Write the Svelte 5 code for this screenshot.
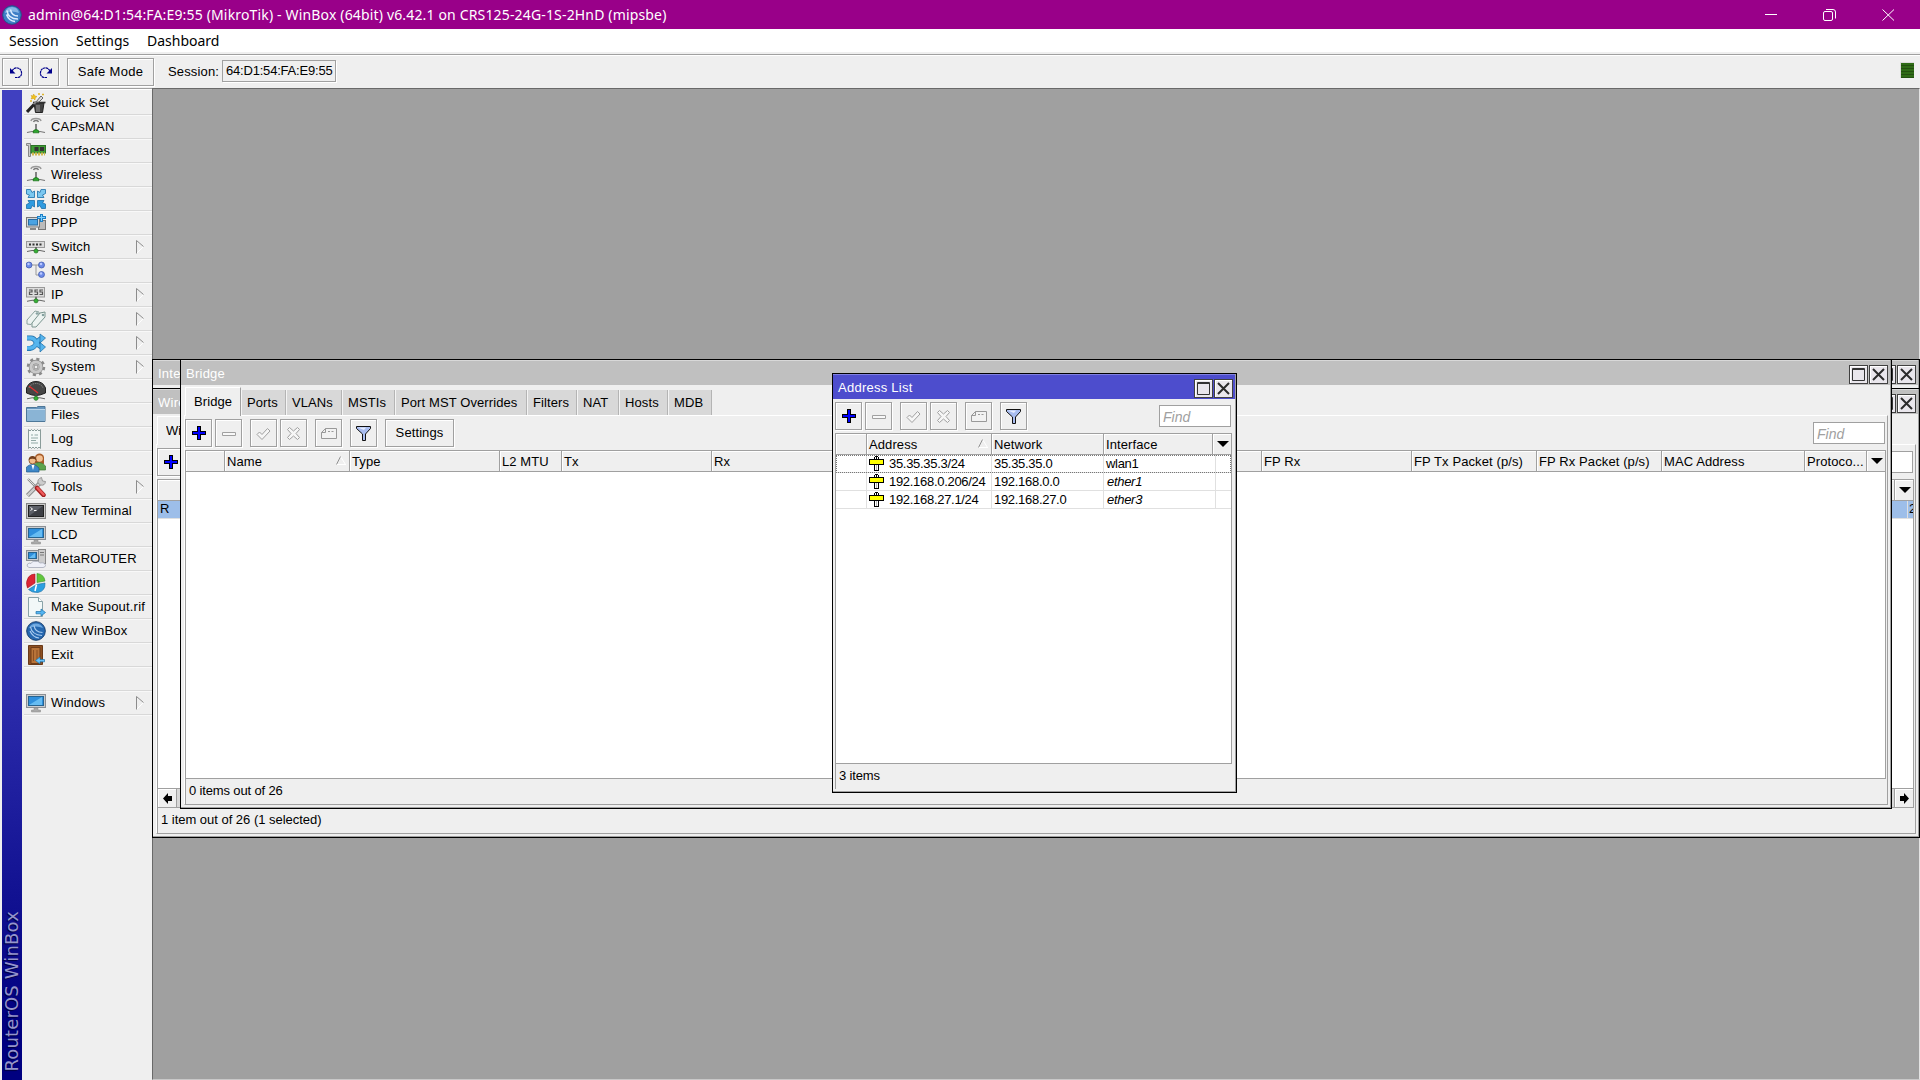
<script>
  const items = [
    ['Quick Set', 'wand'], ['CAPsMAN', 'antenna'], ['Interfaces', 'card'], ['Wireless', 'antenna'],
    ['Bridge', 'bridge'], ['PPP', 'ppp'], ['Switch', 'switch', 1], ['Mesh', 'mesh'], ['IP', 'ip', 1],
    ['MPLS', 'mpls', 1], ['Routing', 'routing', 1], ['System', 'gear', 1], ['Queues', 'gauge'],
    ['Files', 'folder'], ['Log', 'log'], ['Radius', 'users'], ['Tools', 'tools', 1],
    ['New Terminal', 'terminal'], ['LCD', 'monitor'], ['MetaROUTER', 'meta'], ['Partition', 'pie'],
    ['Make Supout.rif', 'supout'], ['New WinBox', 'winbox'], ['Exit', 'exit'], ['', ''],
    ['Windows', 'monitor', 1]
  ];
  const tabs = [
    ['Ports', 45], ['VLANs', 56], ['MSTIs', 53], ['Port MST Overrides', 132],
    ['Filters', 50], ['NAT', 42], ['Hosts', 49], ['MDB', 44]
  ];
  const bridgeCols = [
    ['', 38], ['Name', 125], ['Type', 150], ['L2 MTU', 62], ['Tx', 150], ['Rx', 150],
    ['', 125], ['', 125], ['', 150], ['FP Rx', 150],
    ['FP Tx Packet (p/s)', 125], ['FP Rx Packet (p/s)', 125], ['MAC Address', 143], ['Protoco...', 62]
  ];
  const addrCols = [['', 30], ['Address', 125], ['Network', 112], ['Interface', 109]];
  const rows = [
    ['35.35.35.3/24', '35.35.35.0', 'wlan1'],
    ['192.168.0.206/24', '192.168.0.0', 'ether1'],
    ['192.168.27.1/24', '192.168.27.0', 'ether3']
  ];
</script>

{#snippet net(y)}
  <path d="M1 {y + .5}L6 {y - .5}H14L19 {y + .5}" stroke="#666" /><path d="M10 {y - 4}V{y}" stroke="#555" stroke-width="1.4" />
  <circle cx="10" cy={y} r="2.1" fill="#35b035" stroke="#176617" stroke-width=".6" />
{/snippet}

{#snippet screen(w, h)}
  <rect x=".5" y="1.5" width={w} height={h} fill="#c9ccd0" stroke="#8b8f94" />
  <rect x="2.5" y="3.5" width={w - 4} height={h - 4} fill="#2f8fdc" stroke="#27648f" />
  <path d="M3 {h - 1}L{w - 3} 4V{h - 1}Z" fill="#66bcf2" />
{/snippet}

{#snippet icon(n)}
  <svg class="ico" width="20" height="20" viewBox="0 0 20 20" fill="none">
    {#if n === 'wand'}
      <path d="M8 10H18L16.500 19.500H9.500Z" fill="#444" stroke="#222" />
      <path d="M11 12V19M13 12V19" stroke="#999" /><path d="M7 9.500H19.500" stroke="#333" stroke-width="1.600" />
      <path d="M10 9L15 3L17 5L13 9Z" fill="#ddd" stroke="#666" />
      <path d="M1 19L8 11.500" stroke="#222" stroke-width="3" /><path d="M8 11L10 8.500" stroke="#888" stroke-width="2" />
      <path d="M7.500 1L9 3L11 3.500L9.200 5L9 7L7.500 5.500L5 6L6 4L5 2.500L7 3Z" fill="#f2c21a" stroke="#c99a13" stroke-width=".5" />
      <path d="M12 1H14M16 1.500H18M4 8H6" stroke="#e0b52a" stroke-width="1.500" />
    {:else if n === 'antenna'}
      <path d="M5 4Q5.500 1.500 10 1.500T15 4" stroke="#999" stroke-width="1.500" /><path d="M7.500 5Q8 3.500 10 3.500T12.500 5" stroke="#777" stroke-width="1.400" />
      <path d="M10 7V13" stroke="#777" stroke-width="1.800" /><path d="M1 15.500L6 14.500H14L19 15.500" stroke="#777" stroke-width="1.200" />
      <path d="M7 15.800Q7 12.500 10 12.500T13 15.800Z" fill="#2fa82f" stroke="#166b16" stroke-width=".7" />
    {:else if n === 'card'}
      <path d="M.5 2.500H4.500V15.500H2.500V4.500H.5Z" fill="#ccc" stroke="#888" />
      <rect x="5" y="4.500" width="14.500" height="7.500" fill="#3f9d35" stroke="#2b7225" />
      <path d="M6 13H19" stroke="#d3b94e" stroke-width="3" stroke-dasharray="2 1" />
      <rect x="8.500" y="6" width="4" height="4" fill="#333" /><rect x="14" y="6" width="4" height="4" fill="#333" />
    {:else if n === 'bridge'}
      {#each [0, 90, 180, 270] as a}
        <path transform="rotate({a} 10 10)" d="M.5 .5H4.500L6 3.500L8.500 2V8.500H2L3.500 6L.5 5Z" fill={a > 90 ? '#2f9be0' : '#7cc8f0'} stroke="#1a6fa8" stroke-width=".8" />
      {/each}
    {:else if n === 'ppp'}
      <rect x="12.500" y="7.500" width="7" height="9" fill="#bbb" stroke="#777" /><rect x=".5" y="4.500" width="13" height="9.500" fill="#d5d8db" stroke="#777" />
      <rect x="2.500" y="6.500" width="9" height="5.500" fill="#4aa3e3" stroke="#2a6ca0" /><path d="M4 16H10" stroke="#888" stroke-width="2" />
      <path d="M11 4.500H20M15.500 1V9" stroke="#1b7fc6" stroke-width="3" /><path d="M12 4.500H19M15.500 2V8" stroke="#7ed0ff" />
    {:else if n === 'switch'}
      <rect x=".5" y="4.500" width="18" height="6" fill="#ddd" stroke="#999" />
      <path d="M3 7.500H17" stroke="#333" stroke-width="2" stroke-dasharray="2 1.500" />
      {@render net(14)}
    {:else if n === 'ip'}
      <rect x=".5" y="2.500" width="18" height="9.500" fill="#ddd" stroke="#999" />
      <path d="M3 5H6V7H3.500V9.500H6.500M12 5H9V7H11.500V9.500H8.500M17 5H14V7H16.500V9.500H13.500" stroke="#555" stroke-width="1.200" />
      {@render net(15.800)}
    {:else if n === 'mesh'}
      <path d="M3 4H17M10 4V14H16" stroke="#999" />
      {#each [[3, 4], [15.500, 4], [15.500, 13.500]] as [x, y]}
        <circle cx={x} cy={y} r="3" fill="#6d8be8" stroke="#3a52a8" stroke-width=".7" /><circle cx={x - .5} cy={y - 1} r="1.200" fill="#bccaff" />
      {/each}
    {:else if n === 'mpls'}
      <path d="M1 11L9 2L13 3V7L5 15.500L1 15Z" fill="#edf3f1" stroke="#8ba39e" /><path d="M6 14L14 4L19 3V8L10 18L6 18Z" fill="#edf3f1" stroke="#7a958f" />
      <circle cx="11" cy="4.500" r=".8" stroke="#688" /><circle cx="17" cy="6" r=".8" stroke="#688" />
    {:else if n === 'routing'}
      <path d="M1 5H5Q8 5 10 9T16 14" stroke="#1d6ca5" stroke-width="5" /><path d="M1 15.500H4Q8 15 10 11T15 5.500" stroke="#2277b5" stroke-width="5" />
      <path d="M1 15H4Q8 15 10 11T15 5.500M1 5H5Q8 5 10 9T16 14" stroke="#56b5ee" stroke-width="3.600" />
      <path d="M14 1L19.500 5L14 10ZM14 9.500L19.500 14L14 19Z" fill="#56b5ee" stroke="#1d6ca5" stroke-width=".7" />
    {:else if n === 'gear'}
      <circle cx="10" cy="10" r="7.500" stroke="#8a8a8a" stroke-width="3.500" stroke-dasharray="2.900 3" />
      <circle cx="10" cy="10" r="5" stroke="#888" stroke-width="4.500" /><circle cx="10" cy="10" r="5" stroke="#c9c9c9" stroke-width="3.200" />
      <circle cx="10" cy="10" r="2" fill="#eee" stroke="#888" />
    {:else if n === 'gauge'}
      <path d="M.5 12V7Q3 .500 10 .500T19.500 7V12Q14 14.500 10 14.500T.5 12Z" fill="#454545" stroke="#222" />
      <path d="M3 7Q5 2.500 10 2.500T17 7" stroke="#999" stroke-dasharray="1 1" /><path d="M3 5L12 12" stroke="#e03030" stroke-width="1.300" />
      {@render net(17.300)}
    {:else if n === 'folder'}
      <path d="M.5 2.500H10.500L12 1.500H19V16.500H.5Z" fill="#6796be" stroke="#4d7798" /><path d="M1 5H19V16H1Z" fill="#8ab4d5" />
      <path d="M1 4.500H19" stroke="#b9d6eb" />
    {:else if n === 'log'}
      <path d="M2.500 .5L4 2L5.500 .5L7 2L8.500 .5L10 2L11.500 .5L13 2L14.500 .5V19.500L13 18L11.500 19.500L10 18L8.500 19.500L7 18L5.500 19.500L4 18L2.500 19.500Z" fill="#f3f8f7" stroke="#8a9c9a" />
      <path d="M5 6H7M8.500 6H12M5 9H12M5 11.500H10M5 14H12" stroke="#91a9a6" />
    {:else if n === 'users'}
      <path d="M9 10V4Q10 .500 13.500 .500T18 4V11Z" fill="#a85b27" /><circle cx="13.500" cy="5.500" r="3.300" fill="#f3c092" />
      <path d="M8 17V12Q10 9 13.500 9.500T19.500 13V17Z" fill="#5aa34c" stroke="#3b7733" stroke-width=".7" />
      <circle cx="6.500" cy="7.500" r="3.500" fill="#f2bd8b" stroke="#7b4318" stroke-width=".8" /><path d="M2.500 7Q3 3 6.500 3T10.500 7Q6 4.500 2.500 7Z" fill="#75401d" />
      <path d="M.5 19V14Q3 11.500 6.500 11.500T13 15V19Z" fill="#3e87c8" stroke="#23598d" stroke-width=".7" /><path d="M5.500 12L7 17L8.500 12Z" fill="#fff" />
    {:else if n === 'tools'}
      <path d="M2 2L12 12" stroke="#888" stroke-width="2.200" /><path d="M2 2L11 11" stroke="#ddd" />
      <path d="M1.500 18.500L15 5" stroke="#777" stroke-width="4" /><path d="M1.500 18.500L15 5" stroke="#ccc" stroke-width="2.500" />
      <path d="M12 6Q11 2 15.500 .5L16.500 4L19.500 4.500Q19 9 14.500 8Z" fill="#ccc" stroke="#888" stroke-width=".8" />
      <path d="M11 11L17.500 18" stroke="#a31f1f" stroke-width="4.500" stroke-linecap="round" /><path d="M11.500 11L17.500 17.500" stroke="#ef5b5b" stroke-width="2.500" stroke-linecap="round" />
    {:else if n === 'terminal'}
      <rect x=".5" y="2.500" width="19" height="15" fill="#c9c9c9" stroke="#858585" /><rect x="2.500" y="4.500" width="15" height="11" fill="#3d3f45" stroke="#222" />
      <path d="M3 15V5H17Z" fill="#5d6068" /><path d="M4.500 6.500L6.500 8L4.500 9.500M8 9.500H10.500" stroke="#fff" />
    {:else if n === 'monitor'}
      {@render screen(19, 13)}
      <path d="M8 15H12V17H14.500V19H5.500V17H8Z" fill="#aaa" stroke="#888" stroke-width=".5" />
    {:else if n === 'meta'}
      <rect x="12.500" y=".5" width="7" height="14" fill="#ccc" stroke="#888" /><path d="M14 3.500H18M14 6H18" stroke="#777" />
      {@render screen(12, 10)}
      <path d="M3 18.500Q0 17.500 1.500 15Q3 13.500 5 14.500Q6.500 11 10 12.500Q12 11.500 14 14Q19 13 19.500 16.500Q19 18.500 17 18.500Z" fill="#eef0f8" stroke="#a5a9b8" stroke-width=".8" />
    {:else if n === 'pie'}
      <path d="M9 1V10L1.500 15Q-1 9 2.500 4Q5 1 9 1Z" fill="#dc2434" stroke="#a3121f" stroke-width=".6" />
      <path d="M11 .5Q18 1 19 8L11 9.500Z" fill="#62c63c" stroke="#37912a" stroke-width=".6" />
      <path d="M10.500 11.500L19 10Q19.500 18 12 19.500Q6 20 2.500 16.500Z" fill="#2b9fe0" stroke="#166aa3" stroke-width=".6" /><path d="M10.500 11.500L9 18" stroke="#fff" stroke-width="1.500" />
    {:else if n === 'supout'}
      <path d="M2.500 .5H12.500L16.500 4.500V19.500H2.500Z" fill="#f2f8f8" stroke="#8aa3a8" /><path d="M12.500 .5V4.500H16.500" fill="#fff" stroke="#8aa3a8" />
      <path d="M10 14.500H15V12L19.500 15.500L15 19V16.800H10Z" fill="#55b5f2" stroke="#1b71ab" stroke-width=".7" />
    {:else if n === 'winbox'}
      <circle cx="10" cy="10" r="9.300" fill="#2668b0" stroke="#173f70" /><path d="M3 7Q5 2.500 10 2.500T17 7Q10 4 3 7Z" fill="#6ea8e0" />
      <path d="M4.500 6Q6 14 16 14.500M8 4.500Q9 11.500 16.500 11.500M4 10Q7 16.500 13 17" stroke="#a9cbef" stroke-width="1.200" />
    {:else if n === 'exit'}
      <path d="M2.500 .5H16.500V19.500H2.500Z" fill="#8d4f22" stroke="#6a3a19" /><path d="M5 2.500H14V18.500H5Z" fill="#b87339" stroke="#6f3d18" /><path d="M7.500 5V16M11 5V16" stroke="#8d4f22" />
      <path d="M18.500 14.500H14V12L9.500 15.500L14 19V16.800H18.500Z" fill="#6bc1f7" stroke="#1b71ab" stroke-width=".7" />
    {/if}
  </svg>
{/snippet}

{#snippet plus()}
  <button class="btn sq"><svg width="14" height="14" viewBox="0 0 14 14" shape-rendering="crispEdges"><path d="M5 0H9V5H14V9H9V14H5V9H0V5H5Z" fill="#000" /><path d="M6 1H8V6H13V8H8V13H6V8H1V6H6Z" fill="#00f" /></svg></button>
{/snippet}

{#snippet tools()}
  {@render plus()}
  <button class="btn sq"><svg width="15" height="15" viewBox="0 0 15 15"><path d="M1.500 6.500H14.500V9.500H1.500Z" fill="#f8f8f8" stroke="#a0a0a0" /></svg></button>
  <button class="btn sq gap"><svg width="15" height="15" viewBox="0 0 15 15"><path d="M1 8.500L3.500 6L6 8.500L11.500 2.500L14 5L6 13.500Z" fill="#f6f6f6" stroke="#a0a0a0" /></svg></button>
  <button class="btn sq"><svg width="15" height="15" viewBox="0 0 15 15"><path d="M3.500 1.500L7.500 5L11.500 1.500L13.500 3.500L10 7.500L13.500 11.500L11.500 13.500L7.500 10L3.500 13.500L1.500 11.500L5 7.500L1.500 3.500Z" fill="#f6f6f6" stroke="#a0a0a0" /></svg></button>
  <button class="btn sq gap"><svg width="16" height="15" viewBox="0 0 16 15"><path d="M4.500 2.500H15.500V12.500H.5V6.500ZM.5 6.500H4.500V2.500" fill="#f2f2f2" stroke="#999" /><path d="M7 5.500H9M10.500 5.500H12.500" stroke="#999" /></svg></button>
  <button class="btn sq gap"><svg width="15" height="15" viewBox="0 0 15 15"><path d="M.5 .5H14.500V2.500L9.500 8V14.500H6.500V8L.5 2.500Z" fill="#a9bdf0" stroke="#111" /><path d="M2 1.500H10L8 4Z" fill="#e6edff" /></svg></button>
{/snippet}

{#snippet winButtons()}
  <span class="winbtns">
    <button class="wb"><svg width="13" height="13" viewBox="0 0 13 13"><path d="M.5 .5H12.500V12.500H.5ZM0 1.500H13" fill="none" stroke="#333" /></svg></button>
    <button class="wb"><svg width="13" height="13" viewBox="0 0 13 13"><path d="M1 1L12 12M12 1L1 12" stroke="#2b2b2b" stroke-width="2" /></svg></button>
  </span>
{/snippet}

{#snippet header(cols)}
  <div class="thead">
    {#each cols as [label, w], i}
      <div class="th" style:width="{w}px">
        {label}
        {#if i === 1}<svg class="sort" width="10" height="9" viewBox="0 0 10 9"><path d="M9.500 8.500L4.500 .5" stroke="#fff" /><path d="M0 8.500H10" stroke="#fff" /><path d="M.5 8.500L4.500 .5" stroke="#909090" /></svg>{/if}
      </div>
    {/each}
    <div class="th drop"><svg width="12" height="6" viewBox="0 0 12 6"><path d="M0 0H12L6 6Z" /></svg></div>
  </div>
{/snippet}

<div class="app">
  <header class="titlebar">
    <svg class="logo" width="20" height="20" viewBox="0 0 20 20" fill="none"><circle cx="10" cy="10" r="9.300" fill="#3e7fc6" stroke="#234f86" /><path d="M3 8Q4 2 10 2T17 8Q10 5 3 8Z" fill="#86b5e4" /><path d="M5 5.500Q6 14 16 14M8.500 4.500Q9.500 11 16 11M4.500 9.500Q7 16 13 16.500" stroke="#dcecff" stroke-width="1.600" /></svg>
    <span class="caption">admin@64:D1:54:FA:E9:55 (MikroTik) - WinBox (64bit) v6.42.1 on CRS125-24G-1S-2HnD (mipsbe)</span>
    <svg class="sys" width="130" height="12" viewBox="0 0 130 12" fill="none" stroke="#fff"><path d="M0 5.500H12" /><rect x="58.500" y="2.500" width="9" height="9" rx="1.500" /><path d="M61 .5H68Q70.500 .5 70.500 3V9.500" /><path d="M117.500 .5L129 11.500M129 .5L117.500 11.500" /></svg>
  </header>
  <nav class="menubar"><span class="m1">Session</span><span class="m2">Settings</span><span>Dashboard</span></nav>
  <div class="toolbar">
    <button class="btn sq"><svg width="14" height="13" viewBox="0 0 14 13" fill="none"><path d="M3 5Q5 1.500 8.500 2T12.500 6.500T9 11.500H6" stroke="#00008b" stroke-width="1.200" stroke-dasharray="2.500 .4" /><path d="M1 2V7.500H6.500Z" fill="#00008b" /></svg></button>
    <button class="btn sq"><svg width="14" height="13" viewBox="0 0 14 13" fill="none"><path d="M11 5Q9 1.500 5.500 2T1.500 6.500T5 11.500H8" stroke="#00008b" stroke-width="1.200" stroke-dasharray="2.500 .4" /><path d="M13 2V7.500H7.500Z" fill="#00008b" /></svg></button>
    <button class="btn safe">Safe Mode</button>
    <span class="slabel">Session:</span><span class="sfield">64:D1:54:FA:E9:55</span>
    <span class="led"></span>
  </div>

  <div class="main">
    <aside>
      <div class="brand"><span>RouterOS WinBox</span></div>
      <div class="menu">
        {#each items as [label, ic, sub]}
          <div class="item">
            {@render icon(ic)}<span>{label}</span>
            {#if sub}<svg class="arrow" width="8" height="14" viewBox="0 0 8 14" fill="none"><path d="M.5 13.500L7.500 6.500" stroke="#fff" /><path d="M7.500 6.500L.5 .5V13.500" stroke="#8c8c8c" /></svg>{/if}
          </div>
        {/each}
      </div>
    </aside>

    <section class="desk">
      <div class="win w-int">
        <div class="cap"><span class="peek">Interface List</span>{@render winButtons()}</div>
      </div>

      <div class="win w-wifi">
        <div class="cap"><span class="peek">Wireless Tables</span>{@render winButtons()}</div>
        <div class="tabs"><span class="tab on"><span class="peek short">WiFi Interfaces</span></span></div>
        <div class="panel">
          <div class="tools">{@render plus()}<span class="find"></span></div>
          <div class="table">
            {@render header([['', 1736]])}
            <div class="selrow"><span>R</span><span class="last">2</span></div>
            <div class="fill"></div>
            <div class="hscroll">
              <button class="sb"><svg width="9" height="11" viewBox="0 0 9 11"><path d="M0 5.500L5 0V3H9V8H5V11Z" /></svg></button>
              <button class="sb"><svg width="9" height="11" viewBox="0 0 9 11"><path d="M9 5.500L4 0V3H0V8H4V11Z" /></svg></button>
            </div>
          </div>
          <div class="status loose">1 item out of 26 (1 selected)</div>
        </div>
      </div>

      <div class="win w-bridge">
        <div class="cap">Bridge{@render winButtons()}</div>
        <div class="tabs">
          <span class="tab on">Bridge</span>
          {#each tabs as [label, w]}<span class="tab" style:width="{w}px">{label}</span>{/each}
        </div>
        <div class="panel">
          <div class="tools">{@render tools()}<button class="btn gap settings">Settings</button><span class="find">Find</span></div>
          <div class="table">
            {@render header(bridgeCols)}
            <div class="fill"></div>
          </div>
          <div class="status">0 items out of 26</div>
        </div>
      </div>

      <div class="win w-addr">
        <div class="cap active">Address List{@render winButtons()}</div>
        <div class="panel flat">
          <div class="tools">{@render tools()}<span class="find">Find</span></div>
          <div class="table">
            {@render header(addrCols)}
            {#each rows as [a, n, f], i}
              <div class="row" class:focus={i === 0}>
                <span class="c0"></span>
                <span class="c1"><svg width="15" height="15" viewBox="0 0 15 15" shape-rendering="crispEdges"><path d="M6 0H9V1H10V3H15V9H10V15H5V9H0V3H5V1H6Z" /><path d="M6 9H9V14H6ZM6 1H7V3H6ZM8 1H9V3H8Z" fill="#fff" /><path d="M7 9H8V14H7Z" fill="#bbb" /><path d="M1 4H14V8H1Z" fill="#ff0" /></svg>{a}</span>
                <span class="c2">{n}</span>
                <span class="c2" class:dyn={i > 0}>{f}</span>
              </div>
            {/each}
            <div class="fill"></div>
          </div>
          <div class="status">3 items</div>
        </div>
      </div>
    </section>
  </div>
</div>

<style>
  :global(body) { margin: 0; overflow: hidden; }
  .app { width: 1920px; height: 1080px; display: flex; flex-direction: column; background: #efefef; font: 13px/16px "Liberation Sans", Arial, sans-serif; color: #000; overflow: hidden; }
  .app * { box-sizing: border-box; }
  button { font: inherit; color: inherit; padding: 0; margin: 0; }
  svg { display: block; flex: none; }

  .titlebar { height: 29px; background: #990089; color: #fff; display: flex; align-items: center; padding: 0 25px 0 2px; font: 14px/18px "Noto Sans", "Open Sans", sans-serif; }
  .caption { margin-left: 6px; white-space: nowrap; letter-spacing: 0.16px; }
  .sys { margin-left: auto; }
  .menubar { height: 26px; padding: 0 9px 1px; background: #fff; border-bottom: 1px solid #a0a0a0; box-shadow: inset 0 -2px #efefef; display: flex; align-items: center; font: 14px/18px "Noto Sans", "Open Sans", sans-serif; letter-spacing: 0; }
  .m1 { width: 67px; }
  .m2 { width: 71px; }
  .toolbar { height: 33px; flex: none; padding: 2px 6px 0 2px; display: flex; align-items: flex-start; gap: 3px; border-top: 1px solid #fff; }
  .btn { height: 28px; border: 1px solid #a0a0a0; background: #efefef; box-shadow: inset 1px 1px #fff, 1px 1px #fff; display: flex; align-items: center; justify-content: center; flex: none; }
  .sq { width: 27px; }
  .gap { margin-left: 5px; }
  .safe { width: 87px; margin-left: 5px; letter-spacing: 0.3px; }
  .slabel { margin: 6px 0 0 11px; width: 51px; letter-spacing: 0.15px; }
  .sfield { margin-top: 2px; width: 114px; height: 22px; border: 1px solid #a0a0a0; box-shadow: 1px 1px #fff; padding: 2px 0 0 3px; white-space: nowrap; letter-spacing: -0.2px; }
  .led { margin: 4px 0 0 auto; width: 14px; height: 16px; border: 1px solid #dcdcdc; border-width: 1px 0 0 1px; background: repeating-linear-gradient(#2f6b16 0 2px, #235010 2px 3px); }

  .main { flex: 1; min-height: 0; display: flex; }
  aside { width: 152px; flex: none; border-top: 1px solid #a0a0a0; padding: 1px 2px 0; display: flex; gap: 2px; box-shadow: inset 0 1px #fff; }
  .brand { width: 20px; flex: none; background: linear-gradient(#4040c0 0, #4040c0 45%, #000080 95%); display: flex; align-items: flex-end; }
  .brand span { writing-mode: vertical-rl; transform: rotate(180deg); font: 18px/20px "DejaVu Sans", sans-serif; letter-spacing: 0.15px; color: #9595cc; padding-top: 9px; white-space: nowrap; text-shadow: -1px -1px 1px #00003c; }
  .menu { flex: 1; padding-top: 1px; }
  .item { height: 24px; border-bottom: 1px solid #d8d8d8; box-shadow: 0 1px #f8f8f8; padding: 0 8px 0 2px; display: flex; align-items: center; gap: 5px; white-space: nowrap; letter-spacing: 0.2px; }
  .arrow { margin-left: auto; position: relative; left: -1px; }

  .desk { flex: 1; position: relative; background: #a0a0a0; border: 1px solid #696969; border-right-color: #e3e3e3; border-bottom-color: #c8c8c8; }
  .win { position: absolute; isolation: isolate; background: #efefef; border: 1px solid #000; box-shadow: inset -1px -1px #a0a0a0; display: flex; flex-direction: column; }
  .w-int { left: -1px; top: 270px; width: 1768px; height: 60px; }
  .w-wifi { left: -1px; top: 299px; width: 1768px; height: 450px; }
  .w-bridge { left: 27px; top: 270px; width: 1712px; height: 450px; }
  .w-addr { left: 679px; top: 284px; width: 405px; height: 420px; }
  .cap { height: 25px; flex: none; margin-right: 1px; padding: 2px 2px 0 5px; background: #c0c0c0; border-top: 1px solid #d8d8d8; color: #fff; display: flex; align-items: center; letter-spacing: 0.25px; line-height: 18px; }
  .cap.active { background: #4d4dcd; border-top-color: #8080e0; }
  .peek { width: 22px; overflow: hidden; white-space: nowrap; }
  .peek.short { width: 15px; }
  .winbtns { margin-left: auto; display: flex; gap: 1px; }
  .wb { width: 19px; height: 19px; border: 1px solid #404040; background: #e9e6ec; box-shadow: inset 1px 1px #fff; display: flex; align-items: center; justify-content: center; }

  .tabs { height: 30px; flex: none; padding-left: 4px; display: flex; align-items: flex-end; }
  .tab { height: 25px; padding: 1px 6px 0 5px; background: #d8d8d8; border-right: 1px solid #b4b4b4; border-left: 1px solid #f4f4f4; display: flex; align-items: center; white-space: nowrap; letter-spacing: 0.1px; }
  .tab.on { width: 56px; height: 29px; padding: 0 0 1px 8px; background: #efefef; border: 1px solid #fff; border-right-color: #a0a0a0; border-bottom: 0; z-index: 1; margin-bottom: -1px; }
  .panel { flex: 1; min-height: 0; margin: 0 3px 3px; border: 1px solid #a0a0a0; border-top-color: #fff; border-left-color: #fff; display: flex; flex-direction: column; padding: 3px 1px 0 0; }
  .panel.flat { border: 0; margin: 0 4px 3px 2px; padding: 3px 0 0; }
  .tools { display: flex; gap: 3px; height: 31px; flex: none; }
  .settings { width: 69px; letter-spacing: 0.1px; }
  .find { margin: 3px 1px 0 auto; width: 72px; height: 22px; background: #fff; border: 1px solid #a0a0a0; font-style: italic; font-size: 14px; color: #a0a0a0; padding: 3px 0 0 3px; }
  .table { flex: 1; min-height: 0; background: #fff; border: 1px solid #a0a0a0; display: flex; flex-direction: column; }
  .fill { flex: 1; }
  .thead { height: 21px; flex: none; display: flex; background: #efefef; border-bottom: 1px solid #a0a0a0; letter-spacing: 0.1px; }
  .th { flex: none; border-left: 1px solid #a0a0a0; box-shadow: inset 1px 1px #fff; padding: 3px 0 0 2px; white-space: nowrap; display: flex; }
  .th:first-child { border-left: 0; }
  .sort { margin: 2px 3px 0 auto; }
  .th.drop { flex: 1; padding: 0 0 0 1px; align-items: center; justify-content: center; }
  .status { height: 25px; flex: none; border-left: 1px solid #a0a0a0; padding: 4px 0 0 3px; letter-spacing: -0.15px; }
  .status.loose { letter-spacing: -0.02px; }
  .selrow { height: 18px; background: #9dbee9; border-bottom: 1px solid #e0e0e0; display: flex; justify-content: space-between; padding-left: 2px; overflow: hidden; }
  .last { border-left: 1px solid #e0e0e0; width: 6px; padding-left: 1px; }
  .hscroll { height: 19px; border-top: 1px solid #a0a0a0; display: flex; justify-content: space-between; background: #d8d8d8; }
  .sb { width: 19px; border: 0; border-right: 1px solid #a0a0a0; background: #efefef; display: flex; align-items: center; justify-content: center; box-shadow: inset 1px 1px #fff; }
  .sb:last-child { border-right: 0; border-left: 1px solid #a0a0a0; }
  .row { height: 18px; flex: none; display: flex; border-bottom: 1px solid #e0e0e0; letter-spacing: -0.3px; line-height: 18px; white-space: nowrap; }
  .row span { border-right: 1px solid #e0e0e0; }
  .row.focus { outline: 1px dotted #777; outline-offset: -1px; }
  .c0 { width: 31px; }
  .c1 { width: 125px; padding-left: 2px; display: flex; gap: 5px; }
  .c1 svg { margin-top: 1px; }
  .c2 { width: 112px; padding-left: 2px; }
  .dyn { font-style: italic; padding-left: 3px; }
</style>
